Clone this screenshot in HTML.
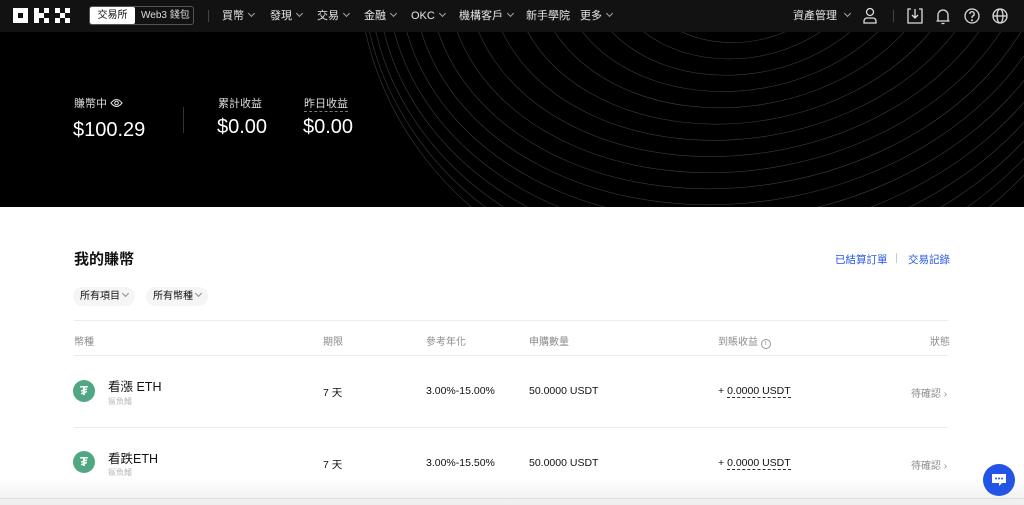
<!DOCTYPE html>
<html><head><meta charset="utf-8"><style>
*{margin:0;padding:0;box-sizing:border-box}
body{width:1024px;height:505px;overflow:hidden;background:#fff;font-family:"Liberation Sans","Noto Sans CJK TC",sans-serif;position:relative}
.hdr{position:absolute;left:0;top:0;width:1024px;height:32px;background:#121212;color:#e6e6e6;font-size:11px}
.hdr span{position:absolute;top:8px;line-height:16px}
.hdr span i{display:inline-block;width:5px;height:5px;border-right:1px solid #aaa;border-bottom:1px solid #aaa;transform:rotate(45deg);margin-left:5px;vertical-align:3px}
.hero{position:absolute;left:0;top:32px;width:1024px;height:175px;background:#000;overflow:hidden;color:#fff}
.abs{position:absolute}
.g{color:#8c8c8c;font-size:10px}
.row{font-size:10.5px;color:#111}
.coin{position:absolute;width:22px;height:22px;border-radius:50%;background:#50a883;color:#fff;font-size:13px;font-weight:bold;text-align:center;line-height:22px}
.line{position:absolute;left:74px;width:874px;height:1px;background:#ececec}
.dash{border-bottom:1px dashed #333}
.pill i{display:inline-block;width:5px;height:5px;border-right:1px solid #888;border-bottom:1px solid #888;transform:rotate(45deg);margin-left:3px;vertical-align:3px}
</style></head><body>
<div class="hdr">
 <svg class="abs" style="left:13px;top:8px" width="58" height="15" viewBox="0 0 58 15"><rect x="0" y="0" width="15" height="15" fill="#fff"/><rect x="5" y="5" width="5" height="5" fill="#121212"/><rect x="21" y="0" width="5" height="15" fill="#fff"/><rect x="26" y="5" width="5" height="5" fill="#fff"/><rect x="31" y="0" width="5" height="5" fill="#fff"/><rect x="31" y="10" width="5" height="5" fill="#fff"/><rect x="42" y="0" width="5" height="5" fill="#fff"/><rect x="52" y="0" width="5" height="5" fill="#fff"/><rect x="47" y="5" width="5" height="5" fill="#fff"/><rect x="42" y="10" width="5" height="5" fill="#fff"/><rect x="52" y="10" width="5" height="5" fill="#fff"/></svg>
 <div class="abs" style="left:89px;top:6px;width:105px;height:19px;border:1px solid #555;border-radius:3px"></div>
 <div class="abs" style="left:90px;top:7px;width:45px;height:17px;background:#fff;border-radius:2px;color:#111;font-size:10px;text-align:center;line-height:17px">交易所</div>
 <div class="abs" style="left:141px;top:7px;font-size:10px;line-height:17px;color:#ddd">Web3 錢包</div>
 <div class="abs" style="left:208px;top:10px;width:1px;height:12px;background:#444"></div>
 <span style="left:222px">買幣<i></i></span><span style="left:270px">發現<i></i></span><span style="left:317px">交易<i></i></span><span style="left:364px">金融<i></i></span><span style="left:411px">OKC<i></i></span><span style="left:459px">機構客戶<i></i></span><span style="left:526px">新手學院</span><span style="left:580px">更多<i></i></span>
 <span style="left:793px">資產管理<i style="margin-left:8px"></i></span>
 <svg class="abs" style="left:860px;top:6px" width="20" height="20" viewBox="0 0 20 20" fill="none" stroke="#ddd" stroke-width="1.3"><circle cx="10" cy="6" r="3.5"/><path d="M4 17h12v-2a3 3 0 0 0-3-3H7a3 3 0 0 0-3 3z"/></svg>
 <div class="abs" style="left:893px;top:10px;width:1px;height:12px;background:#444"></div>
 <svg class="abs" style="left:905px;top:6px" width="20" height="20" viewBox="0 0 20 20" fill="none" stroke="#ddd" stroke-width="1.3"><path d="M6 3H3v14h14V3h-3M10 3v9M7 9l3 3 3-3"/></svg>
 <svg class="abs" style="left:933px;top:6px" width="20" height="20" viewBox="0 0 20 20" fill="none" stroke="#ddd" stroke-width="1.3"><path d="M5 15V9a5 5 0 0 1 10 0v6zM3.5 15h13M8.5 17.5h3"/></svg>
 <svg class="abs" style="left:962px;top:6px" width="20" height="20" viewBox="0 0 20 20" fill="none" stroke="#ddd" stroke-width="1.3"><circle cx="10" cy="10" r="7"/><path d="M7.8 8a2.2 2.2 0 1 1 3 2c-.8.4-.8 1-.8 2"/><circle cx="10" cy="14.3" r=".4"/></svg>
 <svg class="abs" style="left:990px;top:6px" width="20" height="20" viewBox="0 0 20 20" fill="none" stroke="#ddd" stroke-width="1.3"><circle cx="10" cy="10" r="7"/><ellipse cx="10" cy="10" rx="3" ry="7"/><path d="M3 10h14"/></svg>
</div>
<div class="hero">
 <svg class="abs" style="left:0;top:0" width="1024" height="175" viewBox="0 0 1024 175" fill="none" stroke="#3c3c3c" stroke-width="0.6">
  <g transform="translate(740,-80) rotate(-10)">
  <ellipse rx="110" ry="90"/><ellipse rx="134" ry="106"/><ellipse rx="158" ry="122"/><ellipse rx="182" ry="138"/><ellipse rx="206" ry="154"/><ellipse rx="230" ry="170"/><ellipse rx="253" ry="186"/><ellipse rx="275" ry="202"/><ellipse rx="295" ry="218"/><ellipse rx="313" ry="234"/><ellipse rx="329" ry="250"/><ellipse rx="343" ry="266"/><ellipse rx="355" ry="282"/><ellipse rx="365" ry="298"/><ellipse rx="373" ry="314"/><ellipse rx="379" ry="330"/><ellipse rx="383" ry="346"/>
  </g>
 </svg>
 <div class="abs" style="left:74px;top:63px;font-size:11px;color:#ddd">賺幣中 <svg width="13" height="10" viewBox="0 0 13 10" style="vertical-align:-1px" fill="none" stroke="#ddd" stroke-width="1.1"><path d="M1 5Q6.5-2 12 5Q6.5 12 1 5z"/><circle cx="6.5" cy="5" r="1.8"/></svg></div>
 <div class="abs" style="left:73px;top:87px;font-size:20px">$100.29</div>
 <div class="abs" style="left:183px;top:75px;width:1px;height:26px;background:#333"></div>
 <div class="abs" style="left:218px;top:63px;font-size:11px;color:#ddd">累計收益</div>
 <div class="abs" style="left:217px;top:84px;font-size:20px">$0.00</div>
 <div class="abs" style="left:304px;top:63px;font-size:11px;color:#ddd;border-bottom:1px dashed #777">昨日收益</div>
 <div class="abs" style="left:303px;top:84px;font-size:20px">$0.00</div>
</div>
<div class="abs" style="left:74px;top:248px;font-size:15px;font-weight:bold;color:#111">我的賺幣</div>
<div class="abs" style="left:835px;top:252px;font-size:10.5px;color:#2354e6">已結算訂單</div>
<div class="abs" style="left:896px;top:253px;width:1px;height:10px;background:#ccc"></div>
<div class="abs" style="left:908px;top:252px;font-size:10.5px;color:#2354e6">交易記錄</div>
<div class="abs pill" style="left:73px;top:287px;width:62px;height:19px;border-radius:10px;background:#f5f5f5;font-size:10px;line-height:19px;padding-left:7px;color:#111">所有項目<i></i></div>
<div class="abs pill" style="left:146px;top:287px;width:62px;height:19px;border-radius:10px;background:#f5f5f5;font-size:10px;line-height:19px;padding-left:7px;color:#111">所有幣種<i></i></div>
<div class="line" style="top:320px"></div>
<div class="abs g" style="left:74px;top:333px">幣種</div>
<div class="abs g" style="left:323px;top:333px">期限</div>
<div class="abs g" style="left:426px;top:333px">參考年化</div>
<div class="abs g" style="left:529px;top:333px">申購數量</div>
<div class="abs g" style="left:718px;top:333px">到賬收益 <span style="display:inline-block;width:10px;height:10px;border:1px solid #999;border-radius:50%;font-size:7px;line-height:8px;text-align:center">i</span></div>
<div class="abs g" style="left:930px;top:333px">狀態</div>
<div class="line" style="top:355px"></div>
<div class="coin" style="left:73px;top:380px">₮</div>
<div class="abs" style="left:108px;top:376px;font-size:12.5px;color:#111">看漲 ETH</div>
<div class="abs" style="left:108px;top:396px;font-size:8px;color:#bbb">鯊魚鰭</div>
<div class="abs row" style="left:323px;top:385px">7 天</div>
<div class="abs row" style="left:426px;top:385px">3.00%-15.00%</div>
<div class="abs row" style="left:529px;top:385px">50.0000 USDT</div>
<div class="abs row" style="left:718px;top:385px">+ <span class="dash">0.0000 USDT</span></div>
<div class="abs g" style="left:911px;top:385px">待確認 ›</div>
<div class="line" style="top:427px"></div>
<div class="coin" style="left:73px;top:451px">₮</div>
<div class="abs" style="left:108px;top:448px;font-size:12.5px;color:#111">看跌ETH</div>
<div class="abs" style="left:108px;top:467px;font-size:8px;color:#bbb">鯊魚鰭</div>
<div class="abs row" style="left:323px;top:457px">7 天</div>
<div class="abs row" style="left:426px;top:457px">3.00%-15.50%</div>
<div class="abs row" style="left:529px;top:457px">50.0000 USDT</div>
<div class="abs row" style="left:718px;top:457px">+ <span class="dash">0.0000 USDT</span></div>
<div class="abs g" style="left:911px;top:457px">待確認 ›</div>
<div class="abs" style="left:0;top:478px;width:1024px;height:27px;background:linear-gradient(rgba(255,255,255,0),#eee)"></div>
<div class="abs" style="left:0;top:498px;width:1024px;height:1px;background:#ddd"></div>
<div class="abs" style="left:983px;top:464px;width:32px;height:32px;border-radius:50%;background:#2354e6"></div>
<svg class="abs" style="left:990px;top:472px" width="18" height="16" viewBox="0 0 18 16"><path d="M2 2h14v9h-4l-3 3v-3H2z" fill="#fff"/><circle cx="6" cy="6.5" r="1" fill="#2354e6"/><circle cx="9" cy="6.5" r="1" fill="#2354e6"/><circle cx="12" cy="6.5" r="1" fill="#2354e6"/></svg>
</body></html>
